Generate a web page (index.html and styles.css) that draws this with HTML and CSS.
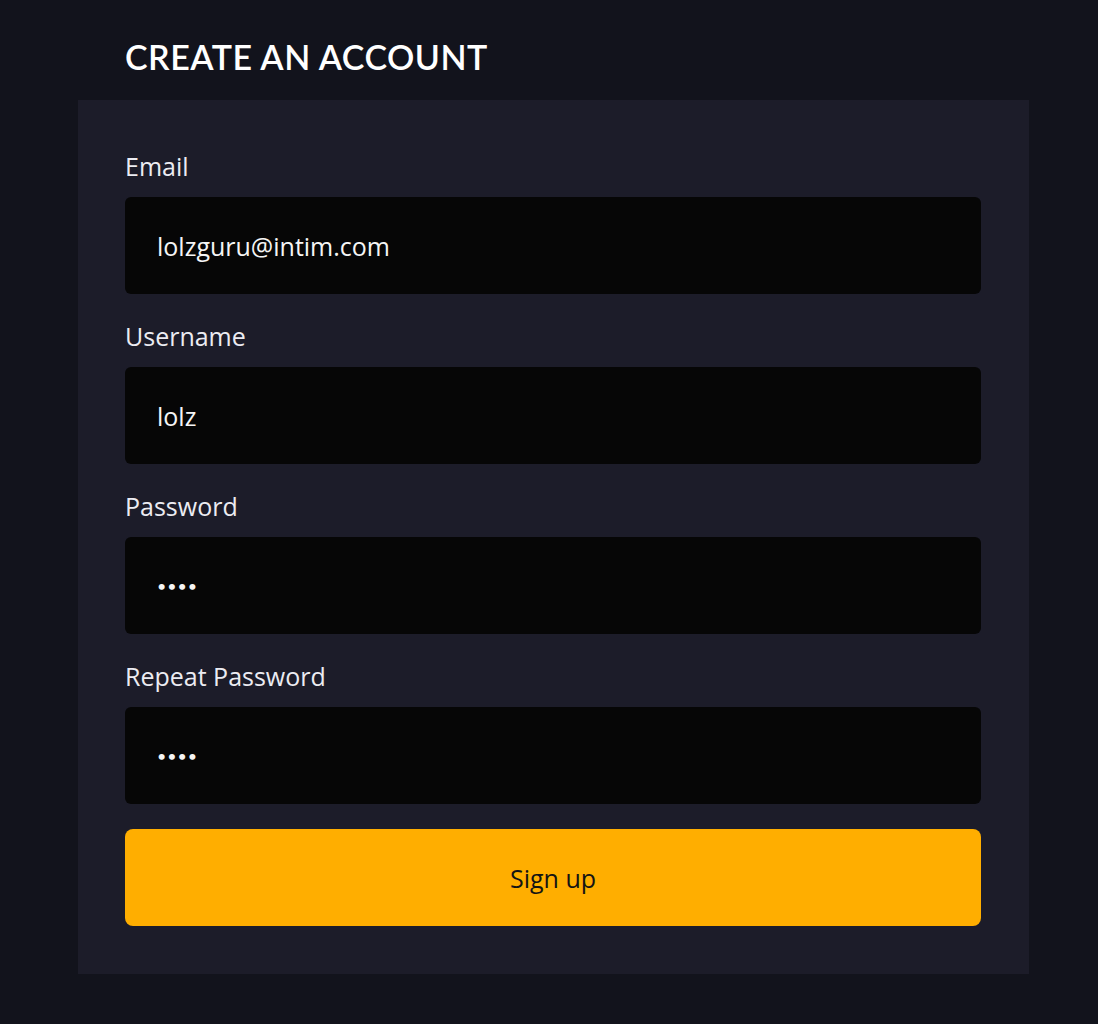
FILE: index.html
```html
<!DOCTYPE html>
<html lang="en">
<head>
<meta charset="utf-8">
<title>Create an account</title>
<link rel="stylesheet" href="styles.css">
</head>
<body>
<main class="page">
  <h1 class="title">CREATE AN ACCOUNT</h1>
  <form class="card">
    <label class="field">
      <span class="label">Email</span>
      <input class="input" type="text" value="lolzguru@intim.com">
    </label>
    <label class="field">
      <span class="label">Username</span>
      <input class="input" type="text" value="lolz">
    </label>
    <label class="field">
      <span class="label">Password</span>
      <input class="input" type="password" value="lolz">
    </label>
    <label class="field">
      <span class="label">Repeat Password</span>
      <input class="input" type="password" value="lolz">
    </label>
    <button class="submit" type="button">Sign up</button>
  </form>
</main>
</body>
</html>
```

FILE: styles.css
```css
* { box-sizing: border-box; }
html, body {
  margin: 0;
  background: #12131c;
  min-height: 100%;
}
body {
  font-family: "Open Sans", "Lato", sans-serif;
  color: #f2f2f5;
}
.page {
  width: 951px;
  margin-left: 78px;
  padding-top: 36px;
}
.title {
  margin: 0 0 0 47px;
  height: 64px;
  font-family: "Lato", sans-serif;
  font-size: 34px;
  line-height: 42px;
  font-weight: 600;
  letter-spacing: 0.5px;
  color: #ffffff;
}
.card {
  background: #1c1c29;
  padding: 51px 48px 48px 47px;
  display: flex;
  flex-direction: column;
}
.field {
  display: flex;
  flex-direction: column;
  margin-bottom: 27px;
}
.field:nth-child(4) { margin-bottom: 25px; }
.label {
  font-size: 25px;
  line-height: 30px;
  margin-bottom: 16px;
  color: #ececf2;
}
.input {
  height: 97px;
  border: 0;
  border-radius: 6px;
  background: #060606;
  color: #f5f5f5;
  font-family: inherit;
  font-size: 25px;
  padding: 0 32px;
  outline: none;
}
.input[type="password"] {
  font-family: "Lato", sans-serif;
  font-size: 16px;
  letter-spacing: 1px;
}
.submit {
  height: 97px;
  border: 0;
  border-radius: 8px;
  background: #ffae00;
  color: #141414;
  font-family: inherit;
  font-size: 25px;
  font-weight: 500;
}
```
